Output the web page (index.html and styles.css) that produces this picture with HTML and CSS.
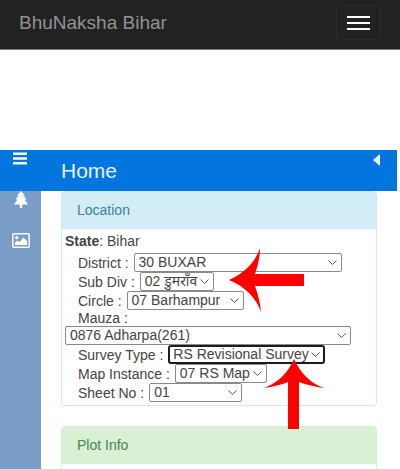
FILE: index.html
```html
<!DOCTYPE html>
<html lang="en">
<head>
    <meta charset="UTF-8">
    <meta name="viewport" content="width=device-width, initial-scale=1.0">
    <title>BhuNaksha Bihar</title>
    <link rel="stylesheet" href="styles.css">
</head>
<body>
    <nav class="navbar">
        <a class="brand" href="#">BhuNaksha Bihar</a>
        <button class="navbar-toggle" type="button" aria-label="Toggle navigation">
            <span class="icon-bar"></span>
            <span class="icon-bar"></span>
            <span class="icon-bar"></span>
        </button>
    </nav>

    <div class="app">
        <!-- Title bar -->
        <header class="title-bar">
            <button class="icon-button menu-button" type="button" aria-label="Menu">
                <svg width="14" height="13" viewBox="0 0 14 13"><path d="M0 .5h14v2.400H0zM0 5.300h14v2.400H0zM0 10.100h14v2.400H0z" fill="#fff"/></svg>
            </button>
            <h1>Home</h1>
            <button class="icon-button collapse-button" type="button" aria-label="Collapse">
                <svg width="7" height="12" viewBox="0 0 7 12"><path d="M7 0v12L0 6z" fill="#fff"/></svg>
            </button>
        </header>

        <div class="main">
            <!-- Sidebar tabs -->
            <aside class="sidebar">
                <button class="icon-button" type="button" aria-label="Layers">
                    <svg width="14" height="17" viewBox="0 0 14 17"><path d="M7 0l4 4.500H9.500l3 4H10.500L14 13.500H8.200V17H5.800v-3.500H0l3.500-5H1.500l3-4H3z" fill="#fff"/></svg>
                </button>
                <button class="icon-button" type="button" aria-label="Images">
                    <svg width="18" height="15" viewBox="0 0 18 15">
                        <rect x="0.800" y="0.800" width="16.400" height="13.400" rx="1" fill="none" stroke="#fff" stroke-width="1.500"/>
                        <circle cx="4.800" cy="4.700" r="1.600" fill="#fff"/>
                        <path d="M3 12V9.500L5.500 7.500 7.500 9l4-4.500L15 8v4z" fill="#fff"/>
                    </svg>
                </button>
            </aside>

            <div class="content">
                <section class="panel panel-info">
                    <h2 class="panel-heading">Location</h2>
                    <form class="panel-body">
                        <p class="state"><b>State</b>: Bihar</p>
                        <div class="field">
                            <label for="district">District :</label>
                            <select id="district" class="select-district"><option>30 BUXAR</option></select>
                        </div>
                        <div class="field">
                            <label for="subdiv">Sub Div :</label>
                            <select id="subdiv" class="select-subdiv"><option>02 डुमराँव</option></select>
                        </div>
                        <div class="field">
                            <label for="circle">Circle :</label>
                            <select id="circle" class="select-circle"><option>07 Barhampur</option></select>
                        </div>
                        <div class="field field-wide">
                            <label for="mauza">Mauza :</label>
                            <select id="mauza" class="select-mauza"><option>0876 Adharpa(261)</option></select>
                        </div>
                        <div class="field">
                            <label for="survey">Survey Type :</label>
                            <select id="survey" class="select-survey active"><option>RS Revisional Survey</option></select>
                        </div>
                        <div class="field">
                            <label for="instance">Map Instance :</label>
                            <select id="instance" class="select-instance"><option>07 RS Map</option></select>
                        </div>
                        <div class="field">
                            <label for="sheet">Sheet No :</label>
                            <select id="sheet" class="select-sheet"><option>01</option></select>
                        </div>

                        <!-- Pointer arrows -->
                        <svg class="arrow arrow-left" width="75" height="66" viewBox="0 0 75 66"><path d="M0 33Q24 22 31 1Q31 13 26 27H75V39H26Q31 53 32 65Q24 43 0 33z" fill="#f00"/></svg>
                        <svg class="arrow arrow-up" width="60" height="70" viewBox="0 0 60 70"><path d="M30 0Q40 22 60 29Q46 27 35 23V70H24V23Q14 27 0 29Q21 21 30 0z" fill="#f00"/></svg>
                    </form>
                </section>

                <section class="panel panel-success">
                    <h2 class="panel-heading">Plot Info</h2>
                    <div class="panel-body"></div>
                </section>
            </div>
        </div>
    </div>
</body>
</html>
```
FILE: styles.css
```css
* {
    box-sizing: border-box;
}

body {
    margin: 0;
    height: 100vh;
    display: flex;
    flex-direction: column;
    background: #fff;
    color: #444;
    font-family: "Liberation Sans", "Noto Sans", Arial, sans-serif;
    font-size: 14px;
}

/* Top navigation */
.navbar {
    display: flex;
    align-items: center;
    justify-content: space-between;
    flex: none;
    height: 50px;
    padding: 0 19px;
    background: #222;
    border-bottom: 1px solid #777;
}

.brand {
    margin-top: -3px;
    color: #929292;
    font-size: 19px;
    text-decoration: none;
}

.navbar-toggle {
    display: flex;
    flex-direction: column;
    align-items: center;
    justify-content: center;
    gap: 4px;
    width: 45px;
    height: 35px;
    margin-top: -4px;
    padding: 0;
    background: transparent;
    border: 1px solid #2c2c2c;
    border-radius: 4px;
}

.icon-bar {
    width: 23px;
    height: 2px;
    background: #fff;
}

/* Application area */
.app {
    display: flex;
    flex-direction: column;
    flex: 1;
    min-height: 0;
    margin: 100px 3px 0 0;
    overflow: hidden;
}

.title-bar {
    display: flex;
    align-items: flex-start;
    flex: none;
    height: 41px;
    background: #0275df;
}

.title-bar h1 {
    flex: 1;
    margin: 0;
    padding-left: 21px;
    color: #e4f3ff;
    font-size: 21px;
    font-weight: 400;
    line-height: 42px;
}

.icon-button {
    display: flex;
    justify-content: center;
    padding: 0;
    background: transparent;
    border: none;
}

.menu-button {
    width: 40px;
    padding-top: 2px;
}

.collapse-button {
    padding: 4px 17px 0 0;
}

.main {
    display: flex;
    flex: 1;
}

.sidebar {
    display: flex;
    flex-direction: column;
    align-items: center;
    gap: 25px;
    width: 41px;
    background: #7a9dc7;
}

.content {
    flex: 1;
    padding: 0 20px;
}

/* Panels */
.panel {
    margin-bottom: 20px;
    border: 1px solid;
    border-radius: 4px;
}

.panel-heading {
    margin: 0;
    padding: 0 15px;
    border-radius: 3px 3px 0 0;
    font-size: 14px;
    font-weight: 400;
    line-height: 37px;
}

.panel-info {
    border-color: #d0ebf0;
}

.panel-info .panel-heading {
    background: #d3edf6;
    color: #3c8199;
}

.panel-success {
    border-color: #d9efd3;
}

.panel-success .panel-heading {
    background: #daf0d5;
    color: #408850;
}

.panel-body {
    position: relative;
    min-height: 40px;
    padding: 0 3px 3px;
}

/* Location form */
.state {
    margin: 0;
    line-height: 24px;
}

.field {
    display: flex;
    align-items: center;
    gap: 5px;
    height: 19px;
    padding-left: 13px;
    white-space: nowrap;
}

.field-wide {
    flex-direction: column;
    align-items: flex-start;
    gap: 0;
    height: auto;
    padding-left: 0;
}

.field-wide label {
    padding-left: 13px;
    line-height: 16px;
}

select {
    height: 19px;
    margin: 0;
    padding: 0 14px 0 4px;
    appearance: none;
    background: #fff url("data:image/svg+xml,%3Csvg xmlns='http://www.w3.org/2000/svg' width='9' height='5'%3E%3Cpath d='M.5 .5l4 4 4-4' fill='none' stroke='%23555'/%3E%3C/svg%3E") no-repeat right 4px center;
    border: 1px solid #8a8a8a;
    border-radius: 2px;
    color: #444;
    font: inherit;
    line-height: 17px;
}

.select-district { width: 208px; }
.select-subdiv { width: 74px; }
.select-circle { width: 117px; }
.select-mauza { width: 286px; }
.select-survey { width: 157px; }
.select-instance { width: 92px; }
.select-sheet { width: 93px; }

select.active {
    padding-left: 3px;
    background-position: right 3px center;
    border: 2px solid #1c1c1c;
    border-radius: 3px;
    line-height: 15px;
}

/* Pointer arrows lie over the form */
.arrow {
    position: absolute;
    pointer-events: none;
}

.arrow-left {
    top: 18px;
    left: 167px;
}

.arrow-up {
    top: 130px;
    left: 202px;
}
```
